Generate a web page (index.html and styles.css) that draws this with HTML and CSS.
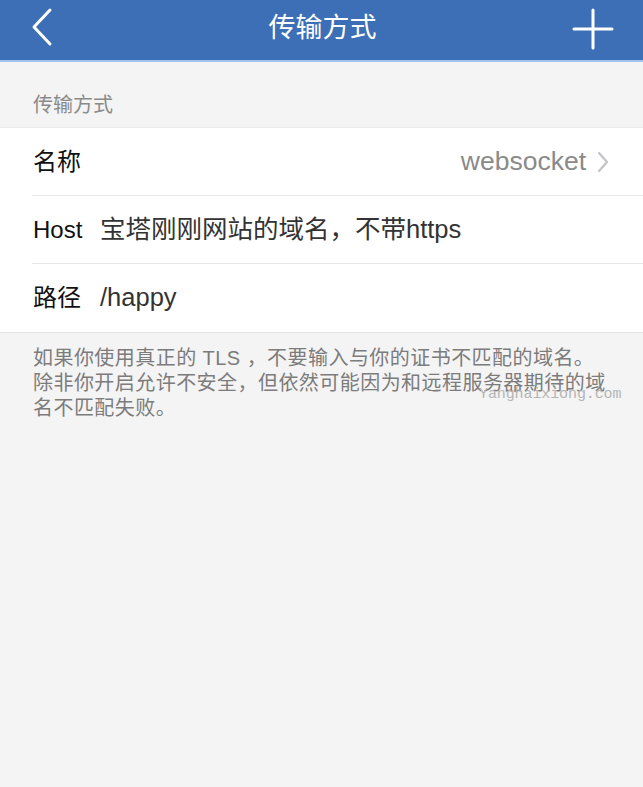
FILE: index.html
```html
<!DOCTYPE html>
<html lang="zh">
<head>
<meta charset="utf-8">
<title>传输方式</title>
<link rel="stylesheet" href="styles.css">
</head>
<body>
<header class="navbar">
  <svg class="nav-back" width="30" height="44" viewBox="0 0 30 44"><polyline points="20,4 4,21 20,38" fill="none" stroke="#fff" stroke-width="3" stroke-linecap="round" stroke-linejoin="round"/></svg>
  <h1 class="nav-title">传输方式</h1>
  <svg class="nav-add" width="44" height="44" viewBox="0 0 44 44"><path d="M22 3V41M3 22H41" stroke="#fff" stroke-width="3" stroke-linecap="round"/></svg>
</header>
<main class="content">
  <div class="section-label">传输方式</div>
  <ul class="list">
    <li class="row">
      <span class="row-label">名称</span>
      <span class="row-detail">websocket</span>
      <svg class="chev" width="12" height="22" viewBox="0 0 12 22"><polyline points="2,2 10,11 2,20" fill="none" stroke="#c4c4c8" stroke-width="2.2" stroke-linecap="round" stroke-linejoin="round"/></svg>
    </li>
    <li class="row">
      <span class="row-label">Host</span>
      <span class="row-value">宝塔刚刚网站的域名，不带https</span>
    </li>
    <li class="row">
      <span class="row-label">路径</span>
      <span class="row-value">/happy</span>
    </li>
  </ul>
  <p class="footnote">如果你使用真正的 TLS ，不要输入与你的证书不匹配的域名。<br>除非你开启允许不安全，但依然可能因为和远程服务器期待的域名不匹配失败。<span class="watermark">Yanghaixiong.com</span></p>
</main>
</body>
</html>
```
FILE: styles.css
```css
* { box-sizing: border-box; }
html, body { margin: 0; padding: 0; }
body {
  width: 643px;
  height: 787px;
  background: #f4f4f4;
  font-family: "Liberation Sans", "Noto Sans CJK SC", sans-serif;
  overflow: hidden;
}
.navbar {
  height: 62px;
  background: #3d6fb6;
  border-bottom: 2px solid #9fc3ea;
  display: flex;
  align-items: center;
  justify-content: space-between;
  padding: 0 30px 2px 30px;
  position: relative;
}
.nav-back { display: block; margin-top: -2px; }
.nav-add { display: block; margin-right: -2px; }
.nav-title {
  position: absolute;
  left: 0; right: 0;
  top: 10px;
  margin: 0;
  padding-left: 2px;
  text-align: center;
  color: #fff;
  font-size: 27px;
  font-weight: normal;
  line-height: 36px;
  pointer-events: none;
}
.content { position: relative; }
.section-label {
  padding: 31px 33px 0;
  height: 65px;
  font-size: 20px;
  line-height: 24px;
  color: #8a8a8a;
}
.list {
  list-style: none;
  margin: 0;
  padding: 0;
  background: #fff;
  border-top: 1px solid #ececec;
  border-bottom: 1px solid #e4e4e4;
}
.row {
  height: 68px;
  margin-left: 32px;
  padding: 17px 34px 0 0;
  display: flex;
  align-items: baseline;
  line-height: 32px;
  border-bottom: 1px solid #e8e8e8;
}
.row:last-child { border-bottom: none; }
.row-label {
  width: 68px;
  flex: none;
  font-size: 24px;
  color: #111;
  padding-left: 1px;
}
.row-value {
  font-size: 25.5px;
  color: #333;
}
.row-detail {
  margin-left: auto;
  font-size: 26.5px;
  color: #8a8a8a;
  margin-right: 11px;
}
.chev { display: block; align-self: center; margin-top: -17px; }
.footnote {
  margin: 0;
  padding: 13px 30px 0 33px;
  font-size: 20px;
  letter-spacing: 0.45px;
  line-height: 25px;
  color: #7c7c7c;
  position: relative;
}
.watermark {
  position: absolute;
  left: 479px;
  top: 53px;
  font-family: "Liberation Mono", monospace;
  font-size: 15px;
  line-height: 18px;
  color: #b4b4b4;
  letter-spacing: -0.1px;
}
```
